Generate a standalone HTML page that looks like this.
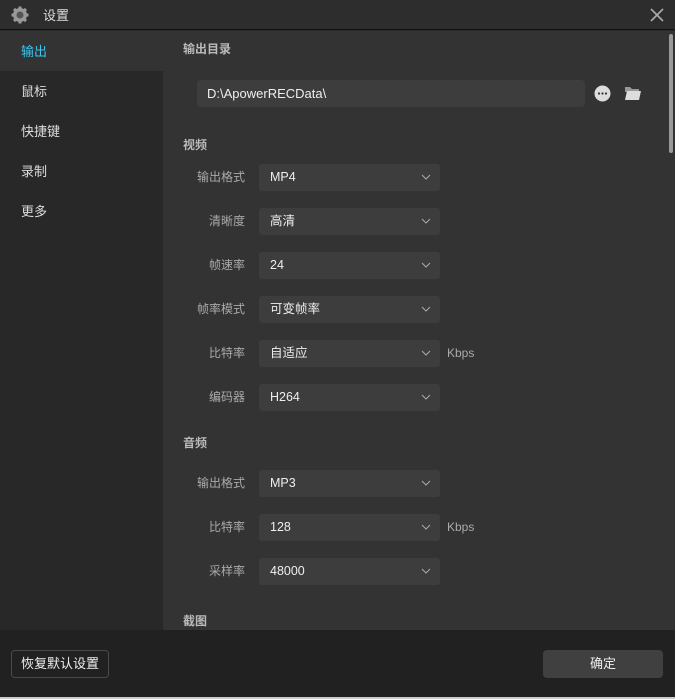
<!DOCTYPE html>
<html><head><meta charset="utf-8"><style>
*{margin:0;padding:0;box-sizing:border-box}
body{width:675px;height:699px;background:#2a2a2a;font-family:"Liberation Sans","Noto Sans CJK SC",sans-serif;position:relative;overflow:hidden;color:#ddd}
.title{position:absolute;left:0;top:0;width:675px;height:30px;background:#2d2d2d;border-bottom:1px solid #111}
.title span{position:absolute;left:43px;top:5px;font-size:13px;color:#ddd}
.side{position:absolute;left:0;top:31px;width:163px;height:599px;background:#282828}
.side div{height:40px;line-height:42px;padding-left:21px;font-size:13px;color:#ddd}
.side .sel{background:#333;color:#3cc6f0}
.main{position:absolute;left:163px;top:31px;width:512px;height:599px;background:#333}
.h{position:absolute;left:183px;font-size:12px;color:#bbb;font-weight:bold;margin-top:-2px}
.lab{position:absolute;width:90px;left:155px;text-align:right;font-size:12px;color:#aaa;margin-top:-2px}
.dd{position:absolute;left:259px;width:181px;height:27px;background:#3d3d3d;border-radius:3px;font-size:12.5px;color:#eee;line-height:27px;padding-left:11px}
.dd svg{position:absolute;right:9px;top:10px}
.kb{position:absolute;left:447px;font-size:12px;color:#aaa}
.foot{position:absolute;left:0;top:630px;width:675px;height:67px;background:#212121}
.btn1{position:absolute;left:11px;top:650px;width:98px;height:28px;border:1px solid #4a4a4a;border-radius:4px;font-size:13px;color:#eee;text-align:center;line-height:26px}
.btn2{position:absolute;left:543px;top:650px;width:120px;height:28px;background:#404040;border-radius:4px;font-size:13px;color:#eee;text-align:center;line-height:28px}
</style></head><body>
<div class="title">
<svg style="position:absolute;left:11px;top:6px" width="18" height="18" viewBox="0 0 18 18"><circle cx="9" cy="9" r="7" fill="#999"/><g fill="#999"><rect x="7.5" y="0.5" width="3" height="17"/><rect x="0.5" y="7.5" width="17" height="3"/><rect x="7.5" y="0.5" width="3" height="17" transform="rotate(45 9 9)"/><rect x="7.5" y="0.5" width="3" height="17" transform="rotate(-45 9 9)"/></g><circle cx="9" cy="9" r="3.5" fill="#555"/></svg>
<span>设置</span>
<svg style="position:absolute;left:650px;top:8px" width="14" height="14" viewBox="0 0 14 14"><path d="M1 1L13 13M13 1L1 13" stroke="#aaa" stroke-width="1.6"/></svg>
</div>
<div class="side"><div class="sel">输出</div><div>鼠标</div><div>快捷键</div><div>录制</div><div>更多</div></div>
<div class="main"></div>
<div style="position:absolute;left:669px;top:34px;width:4px;height:119px;background:#999;border-radius:2px"></div>
<div class="h" style="top:42px">输出目录</div>
<div style="position:absolute;left:197px;top:80px;width:388px;height:27px;background:#3d3d3d;border-radius:4px;font-size:13px;color:#eee;line-height:27px;padding-left:10px">D:\ApowerRECData\</div>
<svg style="position:absolute;left:594px;top:85px" width="17" height="17" viewBox="0 0 17 17"><circle cx="8.5" cy="8.5" r="8" fill="#ddd"/><g fill="#333"><circle cx="5" cy="8.5" r="1.1"/><circle cx="8.5" cy="8.5" r="1.1"/><circle cx="12" cy="8.5" r="1.1"/></g></svg>
<svg style="position:absolute;left:624px;top:85px" width="18" height="16" viewBox="0 0 18 16"><path d="M1 2h5l2 2h7v3H1z" fill="#999"/><path d="M3 6h14l-2 9H1z" fill="#ddd"/></svg>
<div class="h" style="top:138px">视频</div>
<div class="lab" style="top:170px">输出格式</div><div class="dd" style="top:164px">MP4<svg width="10" height="6"><path d="M1 1l4 4 4-4" stroke="#aaa" fill="none"/></svg></div>
<div class="lab" style="top:214px">清晰度</div><div class="dd" style="top:208px">高清<svg width="10" height="6"><path d="M1 1l4 4 4-4" stroke="#aaa" fill="none"/></svg></div>
<div class="lab" style="top:258px">帧速率</div><div class="dd" style="top:252px">24<svg width="10" height="6"><path d="M1 1l4 4 4-4" stroke="#aaa" fill="none"/></svg></div>
<div class="lab" style="top:302px">帧率模式</div><div class="dd" style="top:296px">可变帧率<svg width="10" height="6"><path d="M1 1l4 4 4-4" stroke="#aaa" fill="none"/></svg></div>
<div class="lab" style="top:346px">比特率</div><div class="dd" style="top:340px">自适应<svg width="10" height="6"><path d="M1 1l4 4 4-4" stroke="#aaa" fill="none"/></svg></div><div class="kb" style="top:346px">Kbps</div>
<div class="lab" style="top:390px">编码器</div><div class="dd" style="top:384px">H264<svg width="10" height="6"><path d="M1 1l4 4 4-4" stroke="#aaa" fill="none"/></svg></div>
<div class="h" style="top:436px">音频</div>
<div class="lab" style="top:476px">输出格式</div><div class="dd" style="top:470px">MP3<svg width="10" height="6"><path d="M1 1l4 4 4-4" stroke="#aaa" fill="none"/></svg></div>
<div class="lab" style="top:520px">比特率</div><div class="dd" style="top:514px">128<svg width="10" height="6"><path d="M1 1l4 4 4-4" stroke="#aaa" fill="none"/></svg></div><div class="kb" style="top:520px">Kbps</div>
<div class="lab" style="top:564px">采样率</div><div class="dd" style="top:558px">48000<svg width="10" height="6"><path d="M1 1l4 4 4-4" stroke="#aaa" fill="none"/></svg></div>
<div class="h" style="top:614px">截图</div>
<div class="foot"></div>
<div class="btn1">恢复默认设置</div>
<div class="btn2">确定</div>
<div style="position:absolute;left:0;top:697px;width:675px;height:2px;background:#ccc"></div>
</body></html>
